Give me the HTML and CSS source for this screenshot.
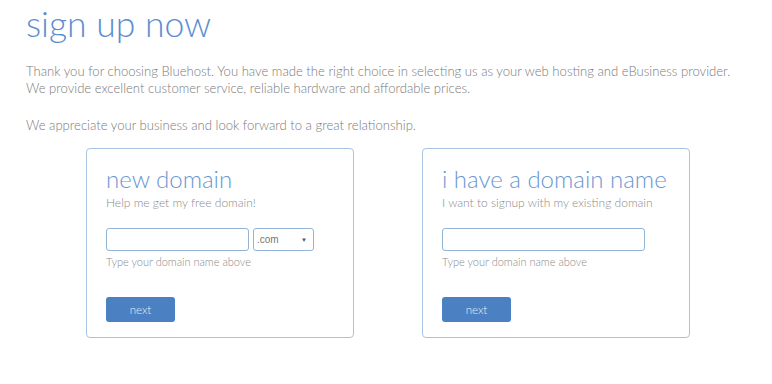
FILE: index.html
```html
<!DOCTYPE html>
<html>
<head>
<meta charset="utf-8">
<link rel="stylesheet" href="styles.css">
</head>
<body>
<div class="page">
  <h1 class="title">sign up now</h1>
  <p class="intro">Thank you for choosing Bluehost. You have made the right choice in selecting us as your web hosting and eBusiness provider.<br>We provide excellent customer service, reliable hardware and affordable prices.</p>
  <p class="intro">We appreciate your business and look forward to a great relationship.</p>
  <div class="cards">
    <div class="card">
      <h2 class="card-title">new domain</h2>
      <div class="card-sub">Help me get my free domain!</div>
      <div class="field-row">
        <div class="input input-short"></div>
        <div class="select"><span>.com</span><span class="caret">&#9660;</span></div>
      </div>
      <div class="hint">Type your domain name above</div>
      <div class="btn">next</div>
    </div>
    <div class="card">
      <h2 class="card-title">i have a domain name</h2>
      <div class="card-sub">I want to signup with my existing domain</div>
      <div class="field-row">
        <div class="input input-long"></div>
      </div>
      <div class="hint">Type your domain name above</div>
      <div class="btn">next</div>
    </div>
  </div>
</div>
</body>
</html>
```

FILE: styles.css
```css
html, body {
  margin: 0;
  padding: 0;
  background: #ffffff;
}
body {
  font-family: "Lato", "Open Sans", sans-serif;
  font-weight: 300;
}
.page {
  padding: 2px 0 0 26px;
}
.title {
  margin: 0;
  font-size: 35.5px;
  font-weight: 300;
  color: #5b8dd0;
  line-height: 44px;
}
.intro {
  margin: 17px 0 0 0;
  font-size: 13.1px;
  line-height: 17px;
  color: #7a7a7a;
}
.intro + .intro {
  margin-top: 20px;
}
.cards {
  display: flex;
  gap: 68px;
  margin: 14px 0 0 60px;
}
.card {
  height: 188px;
  border: 1px solid #a8c2e2;
  border-radius: 4px;
  padding: 0 0 0 19px;
  box-sizing: content-box;
  width: 247px;
}
.card-title {
  margin: 15px 0 0 0;
  font-size: 24px;
  font-weight: 300;
  color: #6a97d2;
  line-height: 30px;
  white-space: nowrap;
}
.card-sub {
  margin-top: 1px;
  font-size: 12px;
  line-height: 16px;
  color: #8a8a8a;
}
.field-row {
  display: flex;
  gap: 4px;
  margin-top: 17px;
}
.input, .select {
  height: 21px;
  border: 1px solid #94b3d8;
  border-radius: 3px;
  background: #fff;
}
.input-short { width: 141px; }
.input-long { width: 201px; }
.select {
  display: flex;
  align-items: center;
  justify-content: space-between;
  padding: 0 6px 0 3px;
  box-sizing: border-box;
  width: 61px;
  height: 23px;
  font-family: "Liberation Sans", Arial, sans-serif;
  font-weight: 400;
  font-size: 10px;
  color: #777;
}
.caret {
  font-size: 6px;
  color: #555;
}
.hint {
  margin-top: 4px;
  font-size: 11px;
  line-height: 14px;
  color: #8a8a8a;
}
.btn {
  margin-top: 28px;
  width: 69px;
  height: 25px;
  background: #4b80c3;
  border-radius: 3px;
  color: #e9eff8;
  font-size: 11.5px;
  line-height: 25px;
  text-align: center;
  font-weight: 300;
}
```
